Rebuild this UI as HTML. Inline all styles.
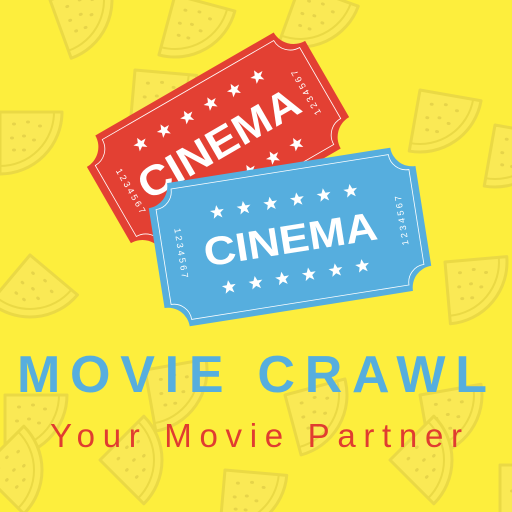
<!DOCTYPE html>
<html><head><meta charset="utf-8"><style>
html,body{margin:0;padding:0;background:#fdee3d;}
svg{display:block}
</style></head><body>
<svg width="512" height="512" viewBox="0 0 512 512" xmlns="http://www.w3.org/2000/svg">
<defs>
<g id="sl">
<path d="M0,0 L62,0 A62 62 0 0 1 0,62 Z" fill="#fae955" stroke="#ead945" stroke-width="3" stroke-linejoin="round"/>
<path d="M54,0 A54 54 0 0 1 0,54" fill="none" stroke="#ead945" stroke-width="2"/>
<g fill="#e6d44a"><ellipse cx="14" cy="12" rx="2" ry="1.5"/><ellipse cx="28" cy="10" rx="2" ry="1.5"/><ellipse cx="40" cy="14" rx="2" ry="1.5"/><ellipse cx="12" cy="26" rx="2" ry="1.5"/><ellipse cx="24" cy="24" rx="2" ry="1.5"/><ellipse cx="34" cy="28" rx="2" ry="1.5"/><ellipse cx="14" cy="38" rx="2" ry="1.5"/><ellipse cx="24" cy="38" rx="2" ry="1.5"/></g>
</g>
<path id="star" d="M0,-7 L2,-2.2 7,-2.2 3,1 4.4,6 0,3 -4.4,6 -3,1 -7,-2.2 -2,-2.2Z" fill="#fff"/>
</defs>
<rect width="512" height="512" fill="#fdee3d"/>
<g>
<use href="#sl" transform="translate(50,0) rotate(-20)"/>
<use href="#sl" transform="translate(175,-5) rotate(15)"/>
<use href="#sl" transform="translate(300,-15) rotate(20)"/>
<use href="#sl" transform="translate(420,90) rotate(10)"/>
<use href="#sl" transform="translate(0,112) rotate(0)"/>
<use href="#sl" transform="translate(30,255) rotate(40)"/>
<use href="#sl" transform="translate(135,70) rotate(5)"/>
<use href="#sl" transform="translate(495,125) rotate(10)"/>
<use href="#sl" transform="translate(445,262) rotate(-5)"/>
<use href="#sl" transform="translate(5,395) rotate(0)"/>
<use href="#sl" transform="translate(145,370) rotate(-10)"/>
<use href="#sl" transform="translate(285,395) rotate(-15)"/>
<use href="#sl" transform="translate(420,395) rotate(-10)"/>
<use href="#sl" transform="translate(100,460) rotate(-45)"/>
<use href="#sl" transform="translate(225,470) rotate(5)"/>
<use href="#sl" transform="translate(390,460) rotate(-45)"/>
<use href="#sl" transform="translate(500,465) rotate(0)"/>
<use href="#sl" transform="translate(-20,470) rotate(-45)"/>
</g>

<!-- red ticket -->
<g transform="translate(218,142) rotate(-30)">
<path d="M-103,-67 L103,-67 A23 23 0 0 0 126,-44 L126,44 A23 23 0 0 0 103,67 L-103,67 A23 23 0 0 0 -126,44 L-126,-44 A23 23 0 0 0 -103,-67Z" fill="#e34033"/>
<path d="M-99,-60 L99,-60 A19 19 0 0 0 118,-41 L118,41 A19 19 0 0 0 99,60 L-99,60 A19 19 0 0 0 -118,41 L-118,-41 A19 19 0 0 0 -99,-60Z" fill="none" stroke="#fff" stroke-width="0.8"/>
<g><use href="#star" x="-68" y="-37"/><use href="#star" x="-41" y="-37"/><use href="#star" x="-14" y="-37"/><use href="#star" x="13" y="-37"/><use href="#star" x="40" y="-37"/><use href="#star" x="67" y="-37"/>
<use href="#star" x="-68" y="41"/><use href="#star" x="-41" y="41"/><use href="#star" x="-14" y="41"/><use href="#star" x="13" y="41"/><use href="#star" x="40" y="41"/><use href="#star" x="67" y="41"/></g>
<text x="0" y="16" text-anchor="middle" font-family="Liberation Sans, sans-serif" font-weight="bold" font-size="42" fill="#fff" textLength="180" lengthAdjust="spacingAndGlyphs">CINEMA</text>
<text transform="translate(-103,0) rotate(90)" text-anchor="middle" font-family="Liberation Sans, sans-serif" font-size="9" fill="#fff" letter-spacing="2.5">1234567</text>
<text transform="translate(104,0) rotate(-90)" text-anchor="middle" font-family="Liberation Sans, sans-serif" font-size="9" fill="#fff" letter-spacing="2.5">1234567</text>
</g>

<!-- blue ticket -->
<g transform="translate(290,237) rotate(-9)">
<path d="M-113,-72.5 L113,-72.5 A22 22 0 0 0 135,-50.5 L135,50.5 A22 22 0 0 0 113,72.5 L-113,72.5 A22 22 0 0 0 -135,50.5 L-135,-50.5 A22 22 0 0 0 -113,-72.5Z" fill="#56aede"/>
<path d="M-110,-66 L110,-66 A18 18 0 0 0 128,-48 L128,48 A18 18 0 0 0 110,66 L-110,66 A18 18 0 0 0 -128,48 L-128,-48 A18 18 0 0 0 -110,-66Z" fill="none" stroke="#fff" stroke-width="0.8"/>
<g><use href="#star" x="-68" y="-36"/><use href="#star" x="-41" y="-36"/><use href="#star" x="-14" y="-36"/><use href="#star" x="13" y="-36"/><use href="#star" x="40" y="-36"/><use href="#star" x="67" y="-36"/>
<use href="#star" x="-68" y="40"/><use href="#star" x="-41" y="40"/><use href="#star" x="-14" y="40"/><use href="#star" x="13" y="40"/><use href="#star" x="40" y="40"/><use href="#star" x="67" y="40"/></g>
<text x="0" y="16" text-anchor="middle" font-family="Liberation Sans, sans-serif" font-weight="bold" font-size="40" fill="#fff" textLength="175" lengthAdjust="spacingAndGlyphs">CINEMA</text>
<text transform="translate(-113,0) rotate(90)" text-anchor="middle" font-family="Liberation Sans, sans-serif" font-size="9" fill="#fff" letter-spacing="2.5">1234567</text>
<text transform="translate(116,0) rotate(-90)" text-anchor="middle" font-family="Liberation Sans, sans-serif" font-size="9" fill="#fff" letter-spacing="2.5">1234567</text>
</g>

<text x="17" y="392" font-family="Liberation Sans, sans-serif" font-weight="bold" font-size="52" fill="#56aede" textLength="470" lengthAdjust="spacing">MOVIE CRAWL</text>
<text x="50" y="447" font-family="Liberation Sans, sans-serif" font-size="33" fill="#e03c30" textLength="412" lengthAdjust="spacing">Your Movie Partner</text>
</svg>
</body></html>
